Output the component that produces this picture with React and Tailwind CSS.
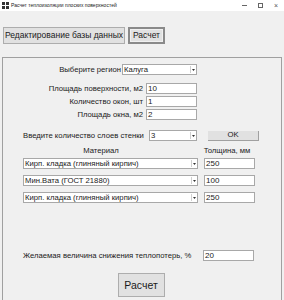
import React from "react";

function Combo({ value, className }) {
  return (
    <div className={"relative flex h-[11px] items-center border border-[#a8a8a8] bg-white " + className}>
      <span className="pl-[1px] text-[7.7px] leading-none whitespace-nowrap">{value}</span>
      <div className="absolute right-[1px] top-[1px] bottom-[1px] flex w-[5px] items-center justify-center border-l border-[#d0d0d0]">
        <svg width="3" height="2" viewBox="0 0 3 2"><path d="M0 0H3L1.5 2Z" fill="#333" /></svg>
      </div>
    </div>
  );
}

function Field({ value, className }) {
  return (
    <div className={"flex h-[11px] items-center border border-[#a8a8a8] bg-white " + className}>
      <span className="pl-[1px] text-[8px] leading-none">{value}</span>
    </div>
  );
}

export default function App() {
  return (
    <div
      className="relative h-[300px] w-[284px] overflow-hidden bg-[#f0f0f0] text-[#1a1a1a]"
      style={{ fontFamily: '"Liberation Sans", Arial, sans-serif' }}
    >
      {/* title bar */}
      <div className="flex h-[11px] items-center bg-white">
        <div className="ml-[2px] grid h-[7px] w-[7px] grid-cols-2 gap-[1px]">
          <div className="bg-[#333]" />
          <div className="bg-[#333]" />
          <div className="bg-[#333]" />
          <div className="bg-[#333]" />
        </div>
        <span className="ml-[2px] text-[5px] leading-none text-[#222]">Расчет теплоизоляции плоских поверхностей</span>
        <div className="ml-auto flex items-center gap-[11px] pr-[6px] text-[#555]">
          <div className="h-[1px] w-[5px] bg-[#666]" />
          <div className="h-[5px] w-[5px] border border-[#666]" />
          <span className="text-[7px] leading-none">×</span>
        </div>
      </div>

      {/* toolbar */}
      <div className="flex gap-[3px] pl-[3px] pt-[16px]">
        <div className="flex h-[17px] w-[122px] items-center justify-center border border-[#adadad] bg-[#e1e1e1] text-[8.5px]">
          Редактирование базы данных
        </div>
        <div className="flex h-[17px] w-[37px] items-center justify-center border-2 border-[#8a8a8a] bg-[#e1e1e1] text-[8.5px]">
          <div className="flex h-full w-full items-center justify-center border border-[#f0f0f0]">Расчет</div>
        </div>
      </div>

      {/* panel */}
      <div className="mt-[13px] mx-[2px] h-[260px] border border-[#a0a0a0] text-[7.7px] leading-none">
        <div className="mt-[6px] flex items-center">
          <span className="w-[119px] pr-[1px] text-right">Выберите регион</span>
          <Combo value="Калуга" className="w-[75px]" />
        </div>

        <div className="mt-[8px] flex flex-col gap-[2px]">
          {[
            ["Площадь поверхности, м2", "10"],
            ["Количество окон, шт", "1"],
            ["Площадь окна, м2", "2"],
          ].map(([l, v]) => (
            <div key={l} className="flex items-center">
              <span className="w-[143px] pr-[3px] text-right">{l}</span>
              <Field value={v} className="w-[51px]" />
            </div>
          ))}
        </div>

        <div className="mt-[10px] flex items-center">
          <span className="w-[146px] pl-[20px] pr-[1px] whitespace-nowrap">Введите количество слоев стенки</span>
          <Combo value="3" className="w-[48px]" />
          <div className="ml-[11px] flex h-[10px] w-[51px] items-center justify-center border-r border-b border-[#a0a0a0] bg-[#e1e1e1]">
            OK
          </div>
        </div>

        <div className="mt-[5px] flex h-[10px] items-center">
          <span className="w-[196px] text-center">Материал</span>
          <span className="w-[56px] text-center">Толщина, мм</span>
        </div>

        <div className="mt-[2px] flex flex-col gap-[6px]">
          {[
            ["Кирп. кладка (глиняный кирпич)", "250"],
            ["Мин.Вата (ГОСТ 21880)", "100"],
            ["Кирп. кладка (глиняный кирпич)", "250"],
          ].map(([m, t], i) => (
            <div key={i} className="flex items-center">
              <Combo value={m} className="ml-[20px] w-[175px]" />
              <Field value={t} className="ml-[6px] w-[51px]" />
            </div>
          ))}
        </div>

        <div className="mt-[47px] flex items-center">
          <span className="w-[200px] pl-[20px] whitespace-nowrap">Желаемая величина снижения теплопотерь, %</span>
          <Field value="20" className="w-[51px]" />
        </div>

        <div className="mt-[12px] flex justify-center pr-[2px]">
          <div className="flex h-[24px] w-[47px] items-center justify-center border border-[#adadad] bg-[#e1e1e1] text-[10.5px]">
            Расчет
          </div>
        </div>
      </div>
    </div>
  );
}
